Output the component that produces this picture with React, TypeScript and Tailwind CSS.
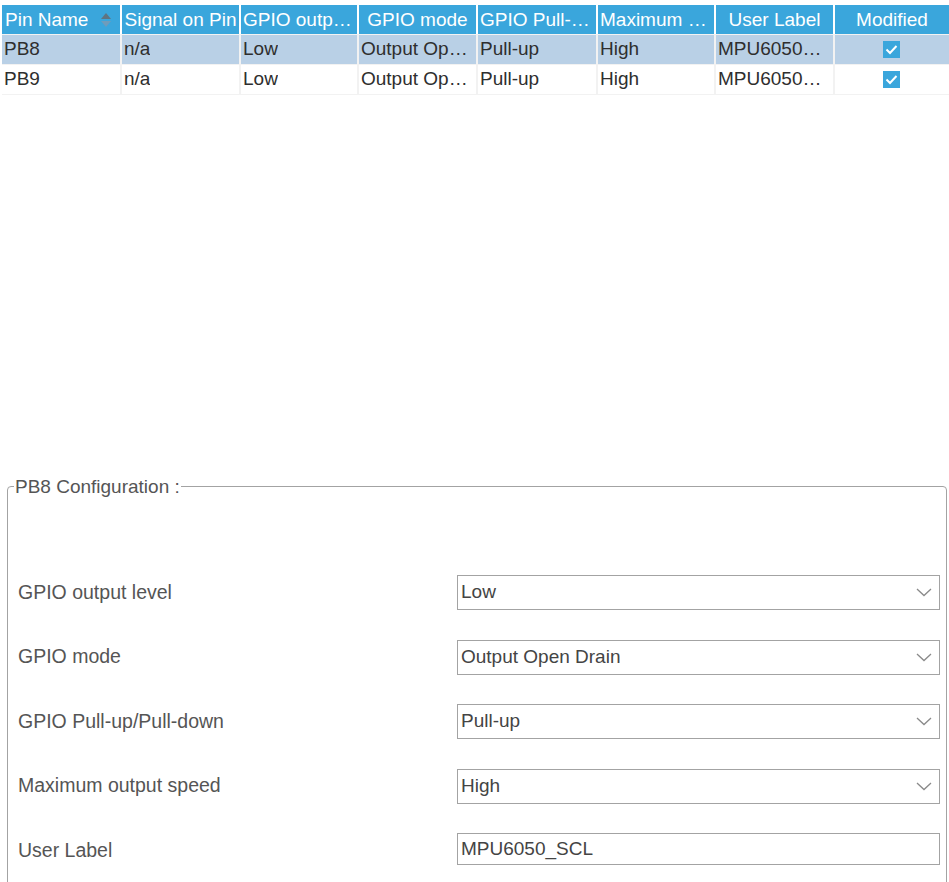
import React from "react";

const cols = "grid grid-cols-[118px_117px_116px_117px_118px_116px_117px_114px] gap-x-[2px]";

function SortIcon() {
  return (
    <svg width="12" height="16" viewBox="0 0 12 16" className="shrink-0">
      <path d="M6 1 L11 7 L1 7 Z" fill="#5f7482" />
      <path d="M6 15 L11 9 L1 9 Z" fill="#6f9cbb" />
    </svg>
  );
}

function Check() {
  return (
    <div className="w-[17px] h-[17px] bg-[#3aa6dc] flex items-center justify-center">
      <svg width="13" height="11" viewBox="0 0 13 11">
        <path d="M1.5 5.5 L5 9 L11.5 2" stroke="white" strokeWidth="2" fill="none" />
      </svg>
    </div>
  );
}

function Chevron() {
  return (
    <svg width="16" height="9" viewBox="0 0 16 9">
      <path d="M1 1 L8 7.5 L15 1" stroke="#8a8a8a" strokeWidth="1.3" fill="none" />
    </svg>
  );
}

const headers = [
  "Pin Name",
  "Signal on Pin",
  "GPIO output level",
  "GPIO mode",
  "GPIO Pull-up/Pull-down",
  "Maximum output speed",
  "User Label",
  "Modified",
];

const rows = [
  ["PB8", "n/a", "Low", "Output Open Drain", "Pull-up", "High", "MPU6050_SCL"],
  ["PB9", "n/a", "Low", "Output Open Drain", "Pull-up", "High", "MPU6050_SDA"],
];

const fields: { label: string; value: string; select: boolean }[] = [
  { label: "GPIO output level", value: "Low", select: true },
  { label: "GPIO mode", value: "Output Open Drain", select: true },
  { label: "GPIO Pull-up/Pull-down", value: "Pull-up", select: true },
  { label: "Maximum output speed", value: "High", select: true },
  { label: "User Label", value: "MPU6050_SCL", select: false },
];

export default function App() {
  return (
    <div
      className="w-[949px] h-[882px] bg-white overflow-hidden"
      style={{ fontFamily: "'Liberation Sans', Arial, sans-serif" }}
    >
      <div className="h-[476px] pt-[5px] pl-[2px]">
        <div className={cols + " h-[29px] text-white text-[19px]"}>
          {headers.map((h, i) => (
            <div
              key={h}
              className={
                "bg-[#3aa6dc] flex items-center overflow-hidden " +
                (i === 0 ? "pl-[3px] pr-[8px] justify-between" : "px-[2px]")
              }
            >
              <span
                className={
                  "block whitespace-nowrap overflow-hidden leading-[29px] " +
                  (i === 0 ? "" : i === 1 ? "w-full text-center text-clip" : "w-full text-center text-ellipsis")
                }
              >
                {h}
              </span>
              {i === 0 && <SortIcon />}
            </div>
          ))}
        </div>
        <div className="bg-[#f2f2f2] pt-[1px] pb-[1px] w-[947px]">
          {rows.map((r, ri) => (
            <div
              key={ri}
              className={cols + " h-[29px] text-[19px] text-[#2e2e2e] " + (ri > 0 ? "mt-[1px]" : "")}
            >
              {r.map((c, ci) => (
                <div
                  key={ci}
                  className={
                    (ri === 0 ? "bg-[#b9d0e6] " : "bg-white ") +
                    "flex items-center px-[2px] overflow-hidden"
                  }
                >
                  <span className="block whitespace-nowrap overflow-hidden text-ellipsis">{c}</span>
                </div>
              ))}
              <div className={(ri === 0 ? "bg-[#b9d0e6] " : "bg-white ") + "flex items-center justify-center pr-[2px]"}>
                <Check />
              </div>
            </div>
          ))}
        </div>
      </div>

      <fieldset className="ml-[7px] mr-[2px] border border-[#a3a3a3] rounded-[4px] pl-[10px] pr-[6px] pt-[78px] pb-[30px] h-[460px]">
        <legend className="-ml-[4px] px-[1px] text-[19px] text-[#555555] leading-[21px]">
          PB8 Configuration :
        </legend>
        <div className="flex flex-col gap-[29.5px]">
          {fields.map((f) => (
            <div key={f.label} className="flex items-center h-[35px]">
              <div className="w-[439px] text-[19.5px] text-[#555555] whitespace-nowrap">{f.label}</div>
              <div
                className={
                  "flex-1 flex items-center justify-between border border-[#a3a3a3] bg-white pl-[3px] pr-[7px] text-[19px] text-[#444444] " +
                  (f.select ? "h-[35px]" : "h-[32px] self-start")
                }
              >
                <span className="whitespace-nowrap">{f.value}</span>
                {f.select && <Chevron />}
              </div>
            </div>
          ))}
        </div>
      </fieldset>
    </div>
  );
}
